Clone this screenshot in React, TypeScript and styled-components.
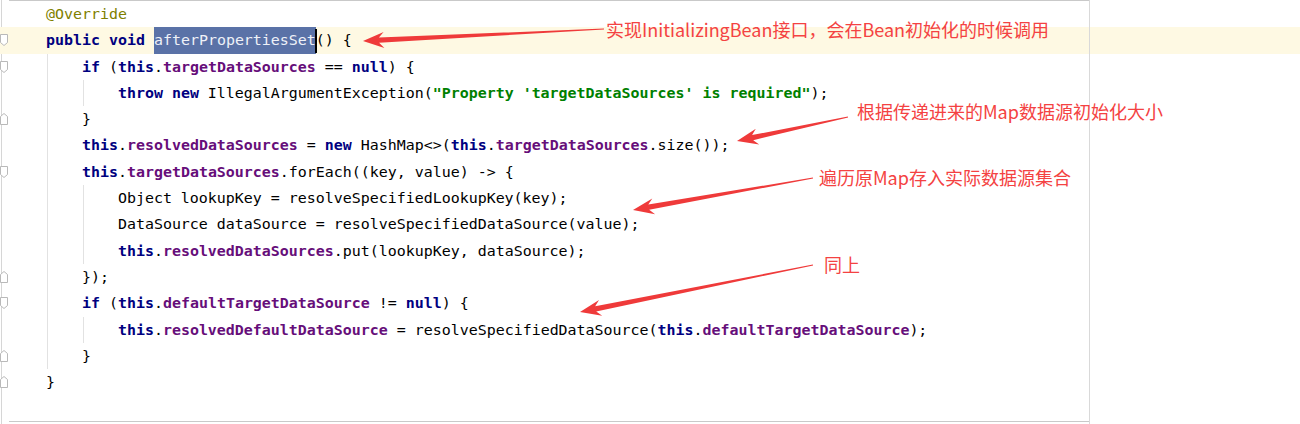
import styled, { createGlobalStyle } from 'styled-components'

const LINE = 26.3
const CHAR = 9

const GlobalStyle = createGlobalStyle`
  html, body {
    margin: 0;
    padding: 0;
    background: #fff;
  }
`

const Editor = styled.div`
  position: relative;
  display: flex;
  width: 1300px;
  height: 424px;
  overflow: hidden;
  background: #fff;
`

const Gutter = styled.div`
  flex: none;
  width: 9px;
  padding-top: 1px;
  display: flex;
  flex-direction: column;
  background: linear-gradient(#d6d6d6, #d6d6d6) 1px 0 / 1px 100% no-repeat;
`

const GutterRow = styled.div<{ $current?: boolean }>`
  height: ${LINE}px;
  display: flex;
  align-items: center;
  background: ${({ $current }) => ($current ? '#fef9e3' : 'transparent')};
`

const Code = styled.div`
  position: relative;
  flex: 1;
  display: flex;
  flex-direction: column;
  padding-top: 1px;

  /* frame top / bottom edges */
  &::before {
    content: '';
    position: absolute;
    left: 0;
    top: 0;
    width: 1081px;
    height: 420px;
    border-top: 1px solid #c9c9c9;
    border-bottom: 1px solid #c9c9c9;
  }

  /* right margin */
  &::after {
    content: '';
    position: absolute;
    left: 1080px;
    top: 0;
    width: 1px;
    height: 100%;
    background: #d9d9d9;
    z-index: 1;
  }
`

const guideBg = (cols: number[]) =>
  cols.length
    ? cols
        .map((c) => `linear-gradient(#e2e2e2, #e2e2e2) ${2 + c * CHAR}px 0 / 1px 100% no-repeat`)
        .join(', ')
    : 'none'

const Line = styled.div<{ $current?: boolean; $guides: number[] }>`
  height: ${LINE}px;
  line-height: ${LINE}px;
  padding-left: 1px;
  white-space: pre;
  font-family: 'DejaVu Sans Mono', 'Liberation Mono', monospace;
  font-size: 14.95px;
  color: #000;
  background: ${({ $guides }) => guideBg($guides)};
  background-color: ${({ $current }) => ($current ? '#fef9e3' : 'transparent')};
`

const Kw = styled.span`
  color: #000080;
  font-weight: bold;
`
const Field = styled.span`
  color: #660e7a;
  font-weight: bold;
`
const Str = styled.span`
  color: #008000;
  font-weight: bold;
`
const Ann = styled.span`
  color: #808000;
`
const Selected = styled.span`
  display: inline-block;
  height: ${LINE}px;
  background: #5a72a7;
  color: #eef1f8;
`
const Caret = styled.span`
  display: inline-block;
  width: 2px;
  height: ${LINE - 2}px;
  margin: 0 -1px;
  vertical-align: middle;
  background: #000;
`

const Note = styled.div<{ $x: number; $y: number }>`
  position: absolute;
  left: ${({ $x }) => $x}px;
  top: ${({ $y }) => $y}px;
  font-family: 'Noto Sans CJK SC', 'Noto Sans', sans-serif;
  font-size: 18px;
  line-height: 24px;
  color: #f44242;
  white-space: nowrap;
  z-index: 3;
`

const Overlay = styled.svg`
  position: absolute;
  left: 0;
  top: 0;
  pointer-events: none;
  z-index: 2;
`

function FoldMark({ kind }: { kind: 'open' | 'close' }) {
  const points = kind === 'open' ? '0,0 7,0 7,8 3.5,11 0,8' : '0,11 7,11 7,3 3.5,0 0,3'
  return (
    <svg width="9" height="12" viewBox="-0.5 -0.5 9 12">
      <polygon points={points} fill="#fff" stroke="#b9b9b9" strokeWidth="1" />
    </svg>
  )
}

type Pt = [number, number]

function arrowPoints(tail: Pt, tip: Pt) {
  const dx = tip[0] - tail[0]
  const dy = tip[1] - tail[1]
  const len = Math.hypot(dx, dy)
  const ux = dx / len
  const uy = dy / len
  const nx = -uy
  const ny = ux
  const head = 21
  const at = (d: number, w: number): string =>
    `${(tip[0] - ux * d + nx * w).toFixed(1)},${(tip[1] - uy * d + ny * w).toFixed(1)}`
  return [
    at(len, 0.4),
    at(head - 5, 2.6),
    at(head, 8),
    at(0, 0),
    at(head, -8),
    at(head - 5, -2.6),
    at(len, -0.4),
  ].join(' ')
}

const arrows: { tail: Pt; tip: Pt }[] = [
  { tail: [604, 29], tip: [363, 41] },
  { tail: [848, 117], tip: [737, 141] },
  { tail: [813, 178], tip: [633, 210] },
  { tail: [813, 265], tip: [580, 312] },
]

const notes = [
  { x: 606, y: 17, text: '实现InitializingBean接口，会在Bean初始化的时候调用' },
  { x: 857, y: 99, text: '根据传递进来的Map数据源初始化大小' },
  { x: 819, y: 165, text: '遍历原Map存入实际数据源集合' },
  { x: 824, y: 252, text: '同上' },
]

type Row = {
  fold?: 'open' | 'close'
  current?: boolean
  guides: number[]
  code: React.ReactNode
}

const rows: Row[] = [
  { guides: [], code: <>    <Ann>@Override</Ann></> },
  {
    fold: 'open',
    current: true,
    guides: [],
    code: (
      <>
        {'    '}<Kw>public</Kw> <Kw>void</Kw> <Selected>afterPropertiesSet</Selected>
        <Caret />
        {'() {'}
      </>
    ),
  },
  {
    fold: 'open',
    guides: [4],
    code: (
      <>
        {'        '}<Kw>if</Kw> (<Kw>this</Kw>.<Field>targetDataSources</Field> == <Kw>null</Kw>) {'{'}
      </>
    ),
  },
  {
    guides: [4, 8],
    code: (
      <>
        {'            '}<Kw>throw</Kw> <Kw>new</Kw> IllegalArgumentException(
        <Str>"Property 'targetDataSources' is required"</Str>);
      </>
    ),
  },
  { fold: 'close', guides: [4], code: <>{'        }'}</> },
  {
    guides: [4],
    code: (
      <>
        {'        '}<Kw>this</Kw>.<Field>resolvedDataSources</Field> = <Kw>new</Kw> HashMap{'<>'}(
        <Kw>this</Kw>.<Field>targetDataSources</Field>.size());
      </>
    ),
  },
  {
    fold: 'open',
    guides: [4],
    code: (
      <>
        {'        '}<Kw>this</Kw>.<Field>targetDataSources</Field>.forEach((key, value) -{'>'} {'{'}
      </>
    ),
  },
  { guides: [4, 8], code: <>{'            Object lookupKey = resolveSpecifiedLookupKey(key);'}</> },
  { guides: [4, 8], code: <>{'            DataSource dataSource = resolveSpecifiedDataSource(value);'}</> },
  {
    guides: [4, 8],
    code: (
      <>
        {'            '}<Kw>this</Kw>.<Field>resolvedDataSources</Field>.put(lookupKey, dataSource);
      </>
    ),
  },
  { fold: 'close', guides: [4], code: <>{'        });'}</> },
  {
    fold: 'open',
    guides: [4],
    code: (
      <>
        {'        '}<Kw>if</Kw> (<Kw>this</Kw>.<Field>defaultTargetDataSource</Field> != <Kw>null</Kw>) {'{'}
      </>
    ),
  },
  {
    guides: [4, 8],
    code: (
      <>
        {'            '}<Kw>this</Kw>.<Field>resolvedDefaultDataSource</Field> = resolveSpecifiedDataSource(
        <Kw>this</Kw>.<Field>defaultTargetDataSource</Field>);
      </>
    ),
  },
  { fold: 'close', guides: [4], code: <>{'        }'}</> },
  { fold: 'close', guides: [], code: <>{'    }'}</> },
]

export default function App() {
  return (
    <>
      <GlobalStyle />
      <Editor>
        <Gutter>
          {rows.map((r, i) => (
            <GutterRow key={i} $current={r.current}>
              {r.fold && <FoldMark kind={r.fold} />}
            </GutterRow>
          ))}
        </Gutter>
        <Code>
          {rows.map((r, i) => (
            <Line key={i} $current={r.current} $guides={r.guides}>
              {r.code}
            </Line>
          ))}
        </Code>

        <Overlay width="1300" height="424" viewBox="0 0 1300 424">
          {arrows.map((a, i) => (
            <polygon key={i} points={arrowPoints(a.tail, a.tip)} fill="#ef3a3a" />
          ))}
        </Overlay>
        {notes.map((n) => (
          <Note key={n.text} $x={n.x} $y={n.y}>
            {n.text}
          </Note>
        ))}
      </Editor>
    </>
  )
}
